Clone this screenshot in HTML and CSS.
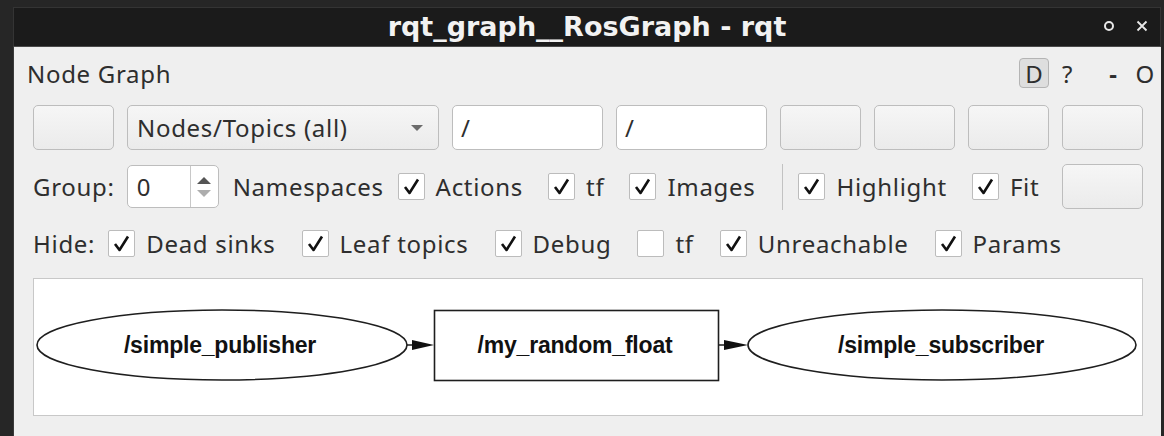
FILE: index.html
```html
<!DOCTYPE html>
<html lang="en">

<head>
    <meta charset="UTF-8">
    <title>rqt_graph__RosGraph - rqt</title>
    <link rel="stylesheet" href="styles.css">
</head>

<body>
    <div class="window">
        <div class="titlebar">
            <span class="title">rqt_graph__RosGraph - rqt</span>
            <div class="wm-buttons">
                <span class="wm-restore"></span>
                <svg class="wm-close" width="12" height="12" viewBox="0 0 12 12">
                    <path d="M1.5 1.5 L10.5 10.5 M10.5 1.5 L1.5 10.5" stroke="#e8e8e8" stroke-width="1.8" />
                </svg>
            </div>
        </div>

        <div class="content">
            <div class="header">
                <span class="plugin-name">Node Graph</span>
                <div class="plugin-tools">
                    <span class="tool-d">D</span>
                    <span class="tool-help">?</span>
                    <span class="tool-min">-</span>
                    <span class="tool-close">O</span>
                </div>
            </div>

            <div class="row row-top">
                <button class="btn"></button>
                <div class="combo">
                    <span>Nodes/Topics (all)</span>
                    <span class="combo-arrow"></span>
                </div>
                <div class="edit">/</div>
                <div class="edit">/</div>
                <button class="btn"></button>
                <button class="btn"></button>
                <button class="btn"></button>
                <button class="btn"></button>
            </div>

            <div class="row row-opts">
                <span class="lbl">Group:</span>
                <div class="spin">
                    <span class="spin-val">0</span>
                    <span class="spin-arrows">
                        <span class="up"></span>
                        <span class="down"></span>
                    </span>
                </div>
                <span class="lbl ns">Namespaces</span>
                <label class="chk on gap-s"><i></i>Actions</label>
                <label class="chk on"><i></i>tf</label>
                <label class="chk on"><i></i>Images</label>
                <span class="sep"></span>
                <label class="chk on after-sep"><i></i>Highlight</label>
                <label class="chk on"><i></i>Fit</label>
                <button class="btn push-right"></button>
            </div>

            <div class="row row-hide">
                <span class="lbl">Hide:</span>
                <label class="chk on first"><i></i>Dead sinks</label>
                <label class="chk on"><i></i>Leaf topics</label>
                <label class="chk on"><i></i>Debug</label>
                <label class="chk"><i></i>tf</label>
                <label class="chk on"><i></i>Unreachable</label>
                <label class="chk on"><i></i>Params</label>
            </div>

            <div class="graph">
                <svg width="1109" height="136" viewBox="0 0 1109 136">
                    <g fill="none" stroke="#1e1e1e" stroke-width="1.6">
                        <ellipse cx="188" cy="66" rx="185" ry="35" />
                        <rect x="400.5" y="31.5" width="284" height="70" />
                        <ellipse cx="908" cy="66" rx="194" ry="35" />
                        <path d="M373 66 H380 M684.5 66 H692" />
                    </g>
                    <g fill="#111">
                        <path d="M378 61 L400 66 L378 71 Z" />
                        <path d="M690 61 L714 66 L690 71 Z" />
                    </g>
                    <g class="node-label" text-anchor="middle">
                        <text x="186" y="74">/simple_publisher</text>
                        <text x="541" y="74">/my_random_float</text>
                        <text x="907" y="74">/simple_subscriber</text>
                    </g>
                </svg>
            </div>
        </div>
    </div>
</body>

</html>
```

FILE: styles.css
```css
body {
    margin: 0;
    background: #262626;
    font-family: 'Noto Sans', 'DejaVu Sans', sans-serif;
    font-size: 24px;
    letter-spacing: 0.7px;
    color: #2e2e2e;
    width: 1164px;
    height: 436px;
    overflow: hidden;
    box-sizing: border-box;
    padding: 7px 3px 0 13px;
}

.window {
    display: flex;
    flex-direction: column;
    height: 429px;
}

.titlebar {
    position: relative;
    height: 38px;
    background: #1b1b1b;
    border: 1px solid #343434;
    border-bottom: 1px solid #4a4a4a;
    display: flex;
    align-items: center;
    justify-content: center;
}

.title {
    font-family: 'DejaVu Sans', sans-serif;
    font-weight: bold;
    font-size: 27px;
    letter-spacing: 0;
    color: #f2f2f2;
    line-height: 1;
    margin-top: -2px;
}

.wm-buttons {
    position: absolute;
    right: 12px;
    top: 12px;
    display: flex;
    align-items: center;
    gap: 22px;
}

.wm-restore {
    width: 6px;
    height: 6px;
    border: 2px solid #e8e8e8;
    border-radius: 50%;
}

.content {
    flex: 1;
    background: #efefef;
    border-left: 1px solid #3a3a3a;
    padding: 0 18px 0 19px;
    display: flex;
    flex-direction: column;
}

.header {
    height: 52px;
    display: flex;
    align-items: center;
    justify-content: space-between;
}

.plugin-name {
    margin-left: -6px;
}

.plugin-tools {
    display: flex;
    align-items: center;
    margin-right: -12px;
}

.tool-d {
    width: 30px;
    height: 30px;
    line-height: 30px;
    box-sizing: border-box;
    text-align: center;
    background: #dedede;
    border: 1px solid #b4b4b4;
    border-radius: 4px;
    letter-spacing: 0;
}

.tool-help {
    margin-left: 13px;
}

.tool-min {
    margin-left: 36px;
    font-weight: bold;
}

.tool-close {
    margin-left: 18px;
}

.row {
    display: flex;
    align-items: center;
}

.row-top {
    margin-top: 6px;
    height: 45px;
    gap: 13px;
}

.btn {
    width: 81px;
    height: 45px;
    background: linear-gradient(#f6f6f6, #ebebeb);
    border: 1px solid #bdbdbd;
    border-radius: 5px;
    padding: 0;
    box-sizing: border-box;
}

.combo {
    width: 312px;
    height: 45px;
    box-sizing: border-box;
    background: linear-gradient(#f6f6f6, #ebebeb);
    border: 1px solid #bdbdbd;
    border-radius: 5px;
    display: flex;
    align-items: center;
    justify-content: space-between;
    padding: 0 15px 0 9px;
}

.combo-arrow {
    width: 0;
    height: 0;
    border-left: 6px solid transparent;
    border-right: 6px solid transparent;
    border-top: 6px solid #6c6c6c;
}

.edit {
    width: 151px;
    height: 45px;
    box-sizing: border-box;
    background: #fff;
    border: 1px solid #bdbdbd;
    border-radius: 5px;
    padding-left: 8px;
    display: flex;
    align-items: center;
}

.row-opts {
    margin-top: 14px;
    height: 45px;
}

.spin {
    margin-left: 12px;
    width: 92px;
    height: 43px;
    box-sizing: border-box;
    background: #fff;
    border: 1px solid #bdbdbd;
    border-radius: 5px;
    display: flex;
}

.spin-val {
    flex: 1;
    padding-left: 9px;
    display: flex;
    align-items: center;
    border-right: 1px solid #c8c8c8;
}

.spin-arrows {
    width: 27px;
    display: flex;
    flex-direction: column;
    align-items: center;
    justify-content: center;
    gap: 6px;
}

.spin-arrows .up {
    border-left: 7px solid transparent;
    border-right: 7px solid transparent;
    border-bottom: 7px solid #555;
}

.spin-arrows .down {
    border-left: 7px solid transparent;
    border-right: 7px solid transparent;
    border-top: 7px solid #adadad;
}

.ns {
    margin-left: 14px;
}

.chk {
    display: flex;
    align-items: center;
    gap: 11px;
    margin-left: 25px;
}

.chk i {
    width: 27px;
    height: 27px;
    box-sizing: border-box;
    background: #fff;
    border: 1px solid #bcbcbc;
    border-radius: 2px;
    display: flex;
    align-items: center;
    justify-content: center;
}

.chk.on i::after {
    content: '';
    width: 17px;
    height: 17px;
    background: url("data:image/svg+xml,%3Csvg xmlns='http://www.w3.org/2000/svg' viewBox='0 0 17 17'%3E%3Cpath d='M2 9 L6.5 15 L15 1.5' fill='none' stroke='%23111' stroke-width='2.6' stroke-linejoin='round'/%3E%3C/svg%3E") no-repeat center;
}

.gap-s {
    margin-left: 14px;
}

.sep {
    width: 1px;
    height: 46px;
    background: #c2c2c2;
    margin-left: 27px;
}

.after-sep {
    margin-left: 15px;
}

.push-right {
    margin-left: auto;
}

.row-hide {
    margin-top: 19px;
    height: 30px;
}

.row-hide .first {
    margin-left: 13px;
}

.row-hide .chk:not(.first) {
    margin-left: 26px;
}

.graph {
    margin-top: 20px;
    height: 138px;
    box-sizing: border-box;
    background: #fff;
    border: 1px solid #c8c8c8;
}

.graph svg {
    display: block;
}

.node-label {
    font-family: 'Liberation Sans', Arial, sans-serif;
    font-weight: bold;
    font-size: 23px;
    letter-spacing: -0.2px;
    fill: #111;
}
```
